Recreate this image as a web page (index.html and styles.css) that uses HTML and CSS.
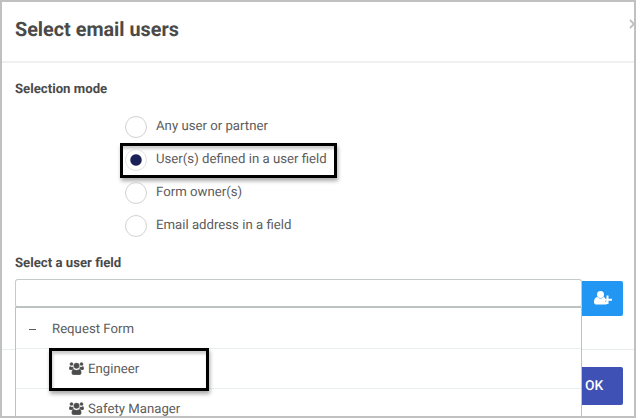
FILE: index.html
```html
<!DOCTYPE html>
<html lang="en">
<head>
<meta charset="utf-8">
<title>Select email users</title>
<link rel="stylesheet" href="styles.css">
</head>
<body>
<svg width="0" height="0" class="defs">
  <symbol id="users" viewBox="0 0 30 26">
    <circle cx="5" cy="4" r="3.7"/><circle cx="25" cy="4" r="3.7"/>
    <circle cx="15" cy="7.5" r="6"/>
    <path d="M2 8Q6 11 9 9Q8 13 10 15Q7 15 6 16H3Q0 16 0 13Q0 9 2 8Z"/>
    <path d="M28 8Q24 11 21 9Q22 13 20 15Q23 15 24 16H27Q30 16 30 13Q30 9 28 8Z"/>
    <path d="M9 14Q15 18 21 14Q25 15 25 22Q25 26 21 26H9Q5 26 5 22Q5 15 9 14Z"/>
  </symbol>
</svg>
<div class="dialog">
  <header class="header">
    <h1 class="title">Select email users</h1>
    <svg class="close" viewBox="0 0 10 10"><path d="M1 1L9 9M9 1L1 9"/></svg>
  </header>
  <main class="content">
    <h2 class="label">Selection mode</h2>
    <div class="options">
      <label class="option"><span class="radio"></span><span>Any user or partner</span></label>
      <label class="option highlighted"><span class="radio checked"></span><span>User(s) defined in a user field</span></label>
      <label class="option"><span class="radio"></span><span>Form owner(s)</span></label>
      <label class="option"><span class="radio"></span><span>Email address in a field</span></label>
    </div>
    <h2 class="label">Select a user field</h2>
    <div class="picker">
      <div class="field">
        <div class="input"></div>
        <div class="menu">
          <div class="item group"><span class="minus"></span><span>Request Form</span></div>
          <div class="item child selected"><svg class="users"><use href="#users"/></svg><span>Engineer</span></div>
          <div class="item child"><svg class="users"><use href="#users"/></svg><span>Safety Manager</span></div>
        </div>
      </div>
      <div class="add">
        <svg viewBox="0 0 36 28"><circle cx="13" cy="7" r="7"/><path d="M7 12Q13 18 19 12Q21 12 22 14V21H26V26Q24 27 22 27H4Q0 27 0 22Q0 13 7 12Z"/><path class="plus" d="M27 9V26M18 17.5H36"/></svg>
      </div>
    </div>
  </main>
  <footer class="footer"><div class="ok">OK</div></footer>
</div>
</body>
</html>
```

FILE: styles.css
```css
*, *::after { box-sizing: border-box; }
body { margin: 0; font-family: Roboto, sans-serif; font-size: 13.2px; color: #5c5c5c; text-rendering: geometricPrecision; }
.defs { display: block; height: 0; }
.dialog { position: relative; width: 636px; height: 418px; border: 2px solid #c0c0c0; overflow: hidden; background: #fff; }
.header { position: relative; height: 61px; padding: 14px 13px; border-bottom: 2px solid #f0f0f0; }
.title { margin: 0; font-size: 19.8px; line-height: 28px; font-weight: 700; color: #4a4a4a; }
.close { position: absolute; right: -5px; top: 17px; width: 10px; height: 10px; fill: none; stroke: #bdbdbd; stroke-width: 1.8; }
.content { height: 286px; padding: 17px 11px 0 13px; }
.label { margin: 0; height: 20px; font-size: 13.2px; line-height: 20px; font-weight: 700; color: #4a4a4a; }
.options { padding: 11px 0 0 105px; margin-bottom: 11px; }
.option { display: flex; align-items: center; gap: 9px; width: 217px; height: 33px; padding-left: 5px; line-height: 20px; white-space: nowrap; }
.option span:last-child { margin-top: -2px; }
.radio { width: 22px; height: 22px; margin-top: -1px; border: 1px solid #d2d2d2; border-radius: 50%; flex: none; }
.checked { background: radial-gradient(circle, #1a2258 5.2px, #fff 6.2px); border-color: #e2e2e2; }
.highlighted { outline: 3px solid #000; outline-offset: -3px; box-shadow: 1px 3px 4px #0005, inset 1px 6px 3px #0003; height: 35px; margin: -1px 0; }
.picker { display: flex; align-items: flex-start; margin-top: 5px; }
.field { position: relative; width: 567px; }
.input { height: 29px; border: 1px solid #c5caca; border-bottom: 2px solid #bdc3c3; border-radius: 3px; }
.menu { position: absolute; z-index: 2; top: 28px; left: 0; width: 567px; height: 112px; border: 1px solid #bcc2c3; border-top: 0; background: #fff; }
.item { display: flex; align-items: center; height: 40px; padding-top: 2px; border-bottom: 1px solid #e9eef0; }
.group { height: 42px; padding-left: 13px; gap: 16px; border-top: 1px solid #bdc3c3; }
.minus { width: 7px; height: 1px; background: #5c5c5c; }
.child { padding-left: 53px; gap: 4px; }
.users { width: 15px; height: 13px; margin-top: -2px; fill: #4c4c4c; stroke: #fff; stroke-width: .4; }
.selected { position: relative; }
.selected::after { content: ""; position: absolute; left: 33px; top: -1px; width: 160px; height: 43px; border: 3px solid #000; box-shadow: 1px 3px 4px #0005, inset 1px 3px 3px #0003; }
.add { display: flex; align-items: center; justify-content: center; width: 41px; height: 35px; margin-top: 2px; background: #2196f3; border-radius: 0 2px 2px 0; }
.add svg { width: 18px; height: 14px; margin-top: -2px; fill: #fff; }
.add .plus { fill: none; stroke: #fff; stroke-width: 4; }
.footer { display: flex; justify-content: flex-end; height: 67px; padding: 17px 11px 0; border-top: 1px solid #e8eef0; }
.ok { width: 56px; height: 38px; padding-left: 18px; font-size: 13.8px; line-height: 39px; font-weight: 500; color: #fff; background: #3f51b5; border-radius: 2px; }
```
